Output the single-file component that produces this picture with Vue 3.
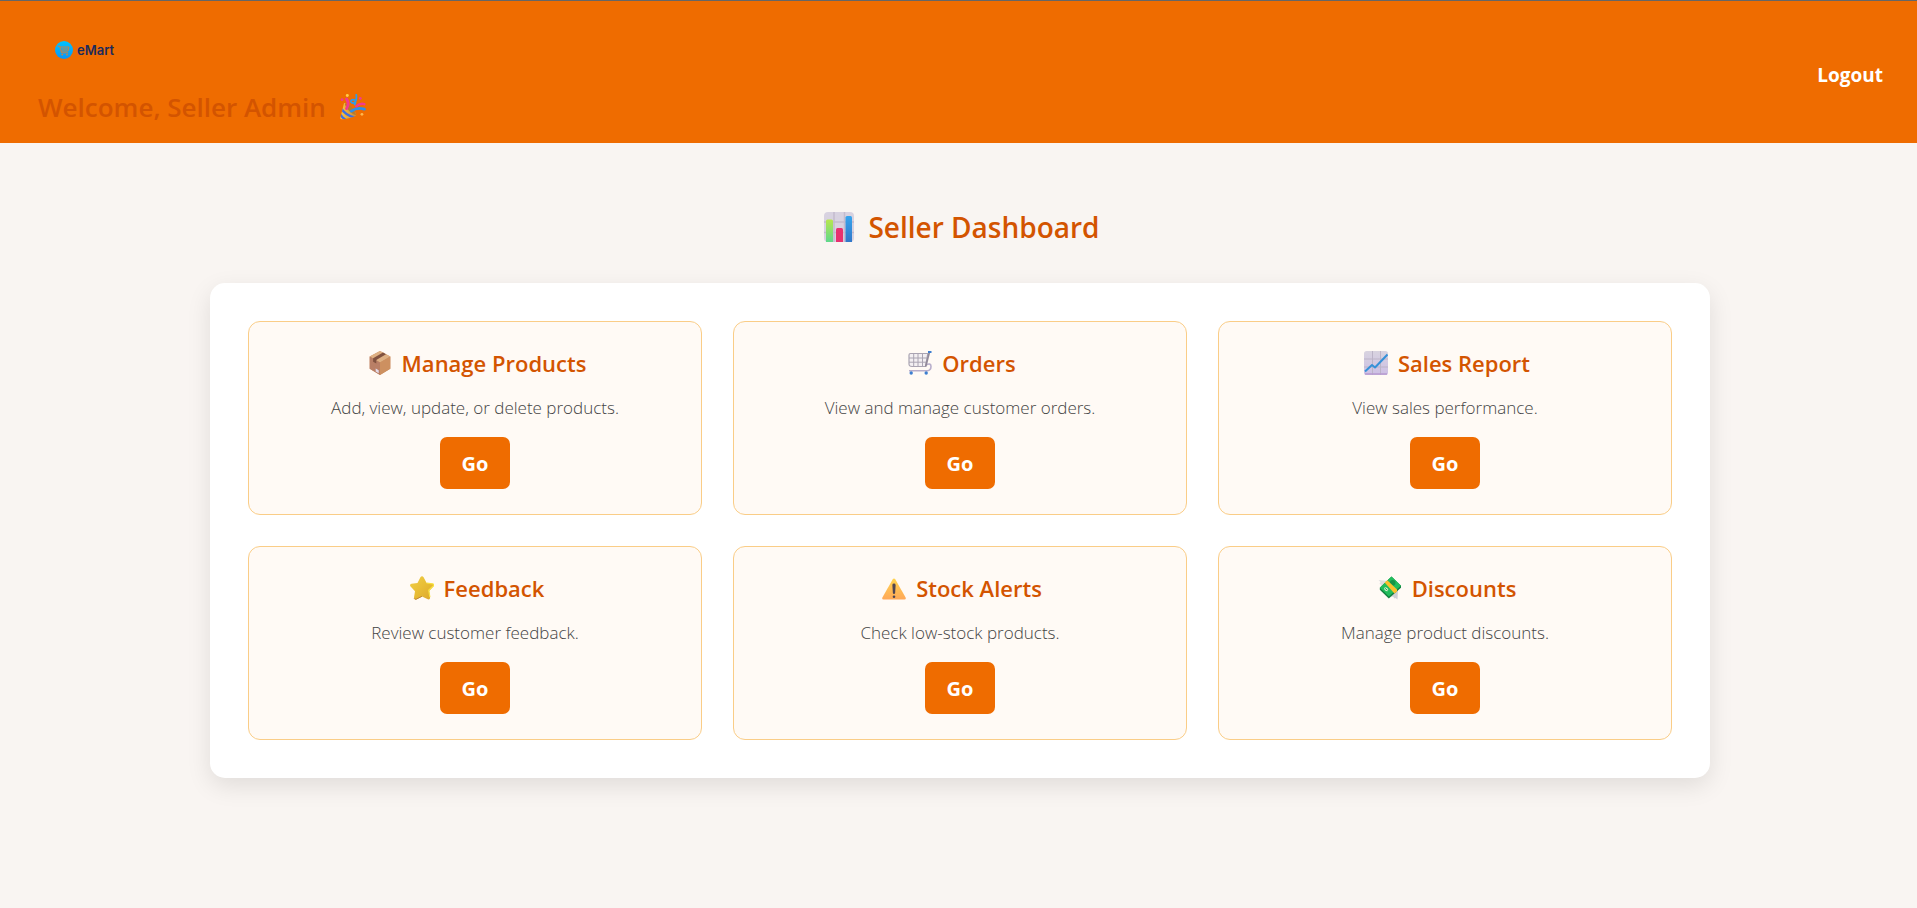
<script setup>
const cards = [
  { icon: 'package', label: 'Package', title: 'Manage Products', text: 'Add, view, update, or delete products.' },
  { icon: 'cart', label: 'Shopping cart', title: 'Orders', text: 'View and manage customer orders.' },
  { icon: 'chart', label: 'Rising chart', title: 'Sales Report', text: 'View sales performance.' },
  { icon: 'star', label: 'Star', title: 'Feedback', text: 'Review customer feedback.' },
  { icon: 'warning', label: 'Warning', title: 'Stock Alerts', text: 'Check low-stock products.' },
  { icon: 'money', label: 'Money with wings', title: 'Discounts', text: 'Manage product discounts.' },
]
</script>

<template>
  <div class="page">
    <header class="topbar">
      <div class="brand">
        <div class="logo">
          <svg class="logo-mark" viewBox="0 0 18 18" aria-hidden="true">
            <defs>
              <linearGradient id="logo-fill" x1="0" y1="0" x2="0" y2="1">
                <stop offset="0" stop-color="#00c4ff" />
                <stop offset="1" stop-color="#0a94f5" />
              </linearGradient>
            </defs>
            <circle cx="9" cy="9" r="9" fill="url(#logo-fill)" />
            <g fill="none" stroke="#c98343" stroke-width="1" stroke-linecap="round" stroke-linejoin="round">
              <path d="M3 5.2h1.8l1.7 6.6h6.3M5.2 6h8.8l-1 4H6.2M7.3 8h5" />
            </g>
            <circle cx="7.2" cy="13.6" r="0.9" fill="#c98343" />
            <circle cx="12" cy="13.6" r="0.9" fill="#c98343" />
          </svg>
          <span>eMart</span>
        </div>
        <h1 class="welcome">
          <span>Welcome, Seller Admin</span>
          <svg class="icon-welcome" viewBox="0 0 32 32" role="img" aria-label="Party popper">
            <defs>
              <linearGradient id="cone" x1="0" y1="0" x2="1" y2="0">
                <stop offset="0" stop-color="#ffc83d" />
                <stop offset="1" stop-color="#c98a3a" />
              </linearGradient>
              <clipPath id="cone-clip"><path d="M5 11C8 11 21 21 20 26c-1 2-14 5-18 5-2 0-2-2-1-4z" /></clipPath>
            </defs>
            <path d="M5 11C8 11 21 21 20 26c-1 2-14 5-18 5-2 0-2-2-1-4z" fill="url(#cone)" />
            <g clip-path="url(#cone-clip)" fill="none" stroke="#3f6fe0" stroke-width="3">
              <path d="M1 17q5 9 17 12M-1 23q3 6 10 10" />
            </g>
            <path d="M6 11.500q10 2 14 14.500q-4-.5-9-5.500T6 11.500" fill="#b87a2b" />
            <path d="M8 6q4 6 0 12" fill="none" stroke="#f23a8e" stroke-width="3.500" stroke-linecap="round" />
            <path d="M20 15q5-4 10-2.500" fill="none" stroke="#f23a8e" stroke-width="3" stroke-linecap="round" />
            <path d="M14 21q7-5 16-2.500" fill="none" stroke="#2f8fe8" stroke-width="3.500" stroke-linecap="round" />
            <path d="M20 1q1 8-3 10c-4 1-5-4-1-4 3 0 4 3 2 6" fill="none" stroke="#2f9bea" stroke-width="2.200" stroke-linecap="round" />
            <circle cx="2.500" cy="7" r="1.700" fill="#f23a8e" />
            <circle cx="25" cy="5.500" r="1.700" fill="#f23a8e" />
            <circle cx="9" cy="1.800" r="1.800" fill="#ffd044" />
            <circle cx="27" cy="25" r="1.700" fill="#ffb94f" />
          </svg>
        </h1>
      </div>
      <a class="logout" href="#">Logout</a>
    </header>

    <main class="content">
      <h2 class="heading">
        <svg class="icon-heading" viewBox="0 0 30 30" role="img" aria-label="Bar chart">
          <defs>
            <linearGradient id="bar-green" x1="0" y1="0" x2="0" y2="1">
              <stop offset="0" stop-color="#b8e64e" />
              <stop offset="1" stop-color="#5fd88c" />
            </linearGradient>
            <linearGradient id="bar-blue" x1="0" y1="0" x2="0" y2="1">
              <stop offset="0" stop-color="#37a5ee" />
              <stop offset="1" stop-color="#3177c9" />
            </linearGradient>
          </defs>
          <rect width="30" height="30" rx="4" fill="#d8d2e0" />
          <path d="M10 0v30M20.500 0v30M0 10h30M0 20.500h30" stroke="#c3bccd" stroke-width="1.500" />
          <path d="M2 30V9q0-1.500 1.500-1.500h4Q9 7.500 9 9v21z" fill="url(#bar-green)" />
          <path d="M12 30V17.500q0-1.500 1.500-1.500h4q1.500 0 1.500 1.500V30z" fill="#e8316f" />
          <path d="M21.500 30V5.500Q21.500 4 23 4h3.500Q28 4 28 5.500V30z" fill="url(#bar-blue)" />
        </svg>
        <span>Seller Dashboard</span>
      </h2>

      <section class="panel">
        <article v-for="card in cards" :key="card.title" class="card">
          <h3 class="card-title">
            <svg v-if="card.icon === 'package'" class="icon" viewBox="0 0 24 24" role="img" :aria-label="card.label">
              <path d="M12 0l10.300 5.500v12.200L12 24 1.700 17.700V5.500z" fill="#c98a62" />
              <path d="M12 0l10.300 5.500L12 11.500 1.700 5.500z" fill="#deb083" />
              <path d="M1.700 5.500L12 11.500V24L1.700 17.700z" fill="#b97f66" />
              <path d="M12 11.500l10.300-6v12.200L12 24z" fill="#cd9060" />
              <path d="M15 1.600l3 1.600-9.700 5.900v3.400l-3.200-1.800V7.300z" fill="#80513f" />
              <path d="M7.700 17.400l3 1.800v3l-3-1.800z" fill="#e4dcec" />
            </svg>

            <svg v-else-if="card.icon === 'cart'" class="icon" viewBox="0 0 24 24" role="img" :aria-label="card.label">
              <path d="M2.500 2.500h17.300l-2.300 13H4Q1 15.500 1 13V4q0-1.500 1.500-1.500z" fill="#f3eff2" stroke="#aaa4b2" stroke-width="1.200" />
              <path d="M5.700 2.500v13M10 2.500v13M14.500 2.500v13M1 7h18M1 11.200h17.500" stroke="#aaa4b2" stroke-width="1" />
              <path d="M18 14q5-2.500 5 1.500-.1 4-3.700 4.200H1" fill="none" stroke="#b8aecb" stroke-width="1.600" />
              <path d="M21.300 1.500L17.700 15.500" stroke="#918999" stroke-width="1.700" />
              <path d="M20 0h3.500v2H20z" fill="#3d7ed0" />
              <circle cx="3.200" cy="22" r="1.700" fill="#3d7ed0" />
              <circle cx="18.200" cy="22" r="1.700" fill="#3d7ed0" />
            </svg>

            <svg v-else-if="card.icon === 'chart'" class="icon" viewBox="0 0 24 24" role="img" :aria-label="card.label">
              <defs>
                <linearGradient id="chart-bg" x1="0" y1="0" x2="0" y2="1">
                  <stop offset="0" stop-color="#d8d3df" />
                  <stop offset="1" stop-color="#cdbfe5" />
                </linearGradient>
              </defs>
              <rect width="24" height="24" rx="2.500" fill="url(#chart-bg)" />
              <path d="M8.500 0v24M16.500 0v24M0 8h24M0 16h24" stroke="#bcb4c7" stroke-width="1" />
              <path d="M1 23h22" stroke="#b79bcf" stroke-width="1.500" />
              <path d="M1 20.500l7-6.500 3 2.500L23.500 3.500" fill="none" stroke="#3591d8" stroke-width="2" stroke-linejoin="round" />
            </svg>

            <svg v-else-if="card.icon === 'star'" class="icon" viewBox="0 0 24 24" role="img" :aria-label="card.label">
              <defs>
                <linearGradient id="star-fill" x1="0" y1="0" x2="1" y2="1">
                  <stop offset="0" stop-color="#f0cf48" />
                  <stop offset="0.5" stop-color="#e8bd35" />
                  <stop offset="1" stop-color="#dba52c" />
                </linearGradient>
              </defs>
              <path d="M10.400 1.300q1.600-2.200 3.200 0l3 5.700 5.900.8q2.400.7.900 2.800l-4.300 4.500 1 6.400q0 2.500-2.300 1.800L12 20.600l-5.800 2.900q-2.300.5-2.200-1.900l1-6.400L.6 10.600q-1.400-2.100.9-2.800l6-.8z" fill="url(#star-fill)" />
              <path d="M16.600 7l5.900.8q1.400.5 1.200 1.600l-5 4.800 1.200 7" fill="none" stroke="#f8e13d" stroke-width="1.200" />
              <path d="M12 20.300l-5.800 2.900q-1.600.3-2-.8" fill="none" stroke="#bd8738" stroke-width="1" />
            </svg>

            <svg v-else-if="card.icon === 'warning'" class="icon" viewBox="0 0 24 24" role="img" :aria-label="card.label">
              <defs>
                <linearGradient id="warning-fill" x1="0" y1="0" x2="0" y2="1">
                  <stop offset="0" stop-color="#ffd34f" />
                  <stop offset="1" stop-color="#ffa858" />
                </linearGradient>
              </defs>
              <path d="M10.600 3.500q1.400-2 2.800 0L23.600 21.500q.8 2-1.200 2H1.600q-2 0-1.200-2z" fill="url(#warning-fill)" />
              <path d="M10.400 9q0-1.400 1.600-1.400T13.600 9l-.5 8q-.1 1-1.100 1t-1.100-1z" fill="#504552" />
              <circle cx="12" cy="20.800" r="1.300" fill="#504552" />
            </svg>

            <svg v-else class="icon" viewBox="0 0 24 24" role="img" :aria-label="card.label">
              <path d="M.5 4l10 1-6 7.500-1.500-2 .5-1.500-2-1 1-2z" fill="#dedede" />
              <path d="M19.500 23.500l-2-1.500-1 .5-1.500-2-2 .5 3-6 4-1z" fill="#cfcfd4" />
              <path d="M13.500.500l9.500 9.300v2L10.800 22.600l-9-8.800v-2z" fill="#12803f" />
              <path d="M13.500.500L23 9.800 10.800 20.600l-9-8.800z" fill="#21bd5c" />
              <circle cx="14.700" cy="6.800" r="2.800" fill="#159447" />
              <ellipse cx="8.200" cy="13.200" rx="2.300" ry="1.600" transform="rotate(40 8.200 13.200)" fill="#d4f2cf" />
              <path d="M7 12.300l2.500 2" stroke="#21a452" stroke-width="1" />
              <path d="M6.700 6.600l2.600-2.300L19 13.400v2l-2.600 2z" fill="#fbc02d" />
            </svg>
            <span>{{ card.title }}</span>
          </h3>
          <p class="card-text">{{ card.text }}</p>
          <button type="button" class="go">Go</button>
        </article>
      </section>
    </main>
  </div>
</template>

<style>
body {
  margin: 0;
  background: #f9f5f2;
}
</style>

<style scoped>
.page {
  font-family: "Segoe UI", "Open Sans", "Noto Sans", sans-serif;
  color: #444;
}

.topbar {
  display: flex;
  align-items: center;
  justify-content: space-between;
  padding: 18px 34px 17px 38px;
  border-top: 1px solid #666;
  background: #ef6c00;
}

.brand {
  display: flex;
  flex-direction: column;
  gap: 7px;
}

.logo {
  display: flex;
  align-items: center;
  gap: 4px;
  height: 62px;
  padding-left: 17px;
  font: 600 13px/18px Inter, sans-serif;
  color: #1b2a5c;
}

.logo-mark {
  width: 18px;
  height: 18px;
}

.welcome,
.heading,
.card-title {
  display: flex;
  align-items: center;
  margin: 0;
  font-weight: 600;
  color: #d35400;
}

.welcome {
  gap: 14px;
  font-size: 26px;
  line-height: 38px;
}

.icon-welcome {
  width: 26px;
  height: 26px;
}

.logout {
  padding-top: 4px;
  font-size: 19px;
  font-weight: 700;
  line-height: 26px;
  color: #fff;
  text-decoration: none;
}

.content {
  display: flex;
  flex-direction: column;
  align-items: center;
  gap: 36px;
  padding: 64px 0 40px 3px;
}

.heading {
  gap: 14px;
  padding-left: 4px;
  font-size: 28px;
  line-height: 40px;
}

.icon-heading {
  width: 30px;
  height: 30px;
}

.panel {
  display: grid;
  grid-template-columns: repeat(auto-fit, minmax(360px, 1fr));
  gap: 31px;
  box-sizing: border-box;
  width: 100%;
  max-width: 1500px;
  padding: 38px;
  border-radius: 15px;
  background: #fff;
  box-shadow: 0 8px 25px rgba(0, 0, 0, 0.1);
}

.card {
  display: flex;
  flex-direction: column;
  align-items: center;
  padding: 25px;
  border: 1px solid #facd87;
  border-radius: 12px;
  background: #fffaf5;
  text-align: center;
}

.card-title {
  gap: 10px;
  padding-left: 4px;
  font-size: 22px;
  line-height: 32px;
}

.icon {
  width: 24px;
  height: 24px;
}

.card-text {
  margin: 16px 0;
  font-size: 17px;
  font-weight: 300;
  line-height: 26px;
}

.go {
  padding: 14px 22px 12px;
  border: 0;
  border-radius: 7px;
  background: #ef6c00;
  font: inherit;
  font-size: 20px;
  font-weight: 700;
  line-height: 26px;
  color: #fff;
  cursor: pointer;
}
</style>
